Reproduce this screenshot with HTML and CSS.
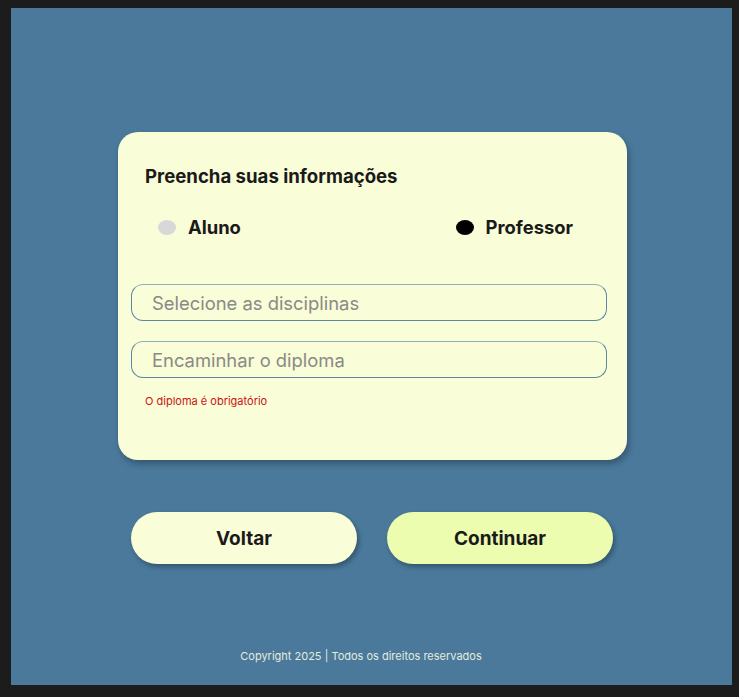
FILE: index.html
```html
<!DOCTYPE html>
<html lang="pt-BR">
<head>
<meta charset="utf-8">
<title>Preencha suas informações</title>
<link rel="stylesheet" href="styles.css">
</head>
<body>
<div class="frame">
  <section class="card">
    <h1 class="title">Preencha suas informações</h1>
    <div class="radios">
      <label class="radio"><span class="dot dot-off"></span><span class="radio-label">Aluno</span></label>
      <label class="radio"><span class="dot dot-on"></span><span class="radio-label">Professor</span></label>
    </div>
    <div class="field field-first">Selecione as disciplinas</div>
    <div class="field">Encaminhar o diploma</div>
    <p class="error">O diploma é obrigatório</p>
  </section>
  <div class="actions">
    <button class="btn btn-back">Voltar</button>
    <button class="btn btn-next">Continuar</button>
  </div>
  <footer class="footer">Copyright 2025 | Todos os direitos reservados</footer>
</div>
</body>
</html>
```
FILE: styles.css
```css
* { box-sizing: border-box; }
html, body { margin: 0; padding: 0; }
body {
  background: #1c1c1c;
  font-family: Inter, "Noto Sans", sans-serif;
  width: 739px;
  height: 697px;
  overflow: hidden;
}
.frame {
  margin: 8px 7px 0 11px;
  width: 721px;
  height: 677px;
  background: #4a799b;
  display: flex;
  flex-direction: column;
  padding-top: 124px;
}
.card {
  margin-left: 107px;
  width: 509px;
  height: 328px;
  background: #f9fdd8;
  border-radius: 20px;
  box-shadow: 2px 4px 6px rgba(0, 0, 0, 0.28);
  padding-top: 33px;
  display: flex;
  flex-direction: column;
}
.title {
  margin: 0 0 0 27px;
  font-size: 18.6px;
  line-height: 22px;
  font-weight: 700;
  color: #1a1a1a;
}
.radios {
  margin-top: 29px;
  display: flex;
  justify-content: space-between;
  padding: 0 54px 0 40px;
  height: 22px;
  align-items: center;
}
.radio {
  display: flex;
  align-items: center;
  gap: 12px;
}
.dot {
  width: 18px;
  height: 15px;
  border-radius: 50%;
}
.dot-off { background: #d8d8d8; }
.dot-on { background: #000; }
.radio-label {
  font-size: 18.4px;
  font-weight: 700;
  color: #1a1a1a;
  line-height: 22px;
}
.field {
  margin: 20px 0 0 13px;
  width: 476px;
  height: 37px;
  border: 1px solid #5b87a4;
  border-top-color: #8fb0b4;
  border-radius: 12px;
  padding-left: 20px;
  display: flex;
  align-items: center;
  font-size: 18.4px;
  color: #8a8a86;
}
.field-first { margin-top: 46px; }
.error {
  margin: 16px 0 0 27px;
  font-size: 11px;
  line-height: 14px;
  color: #cc1111;
}
.actions {
  margin: 52px 0 0 120px;
  display: flex;
  gap: 30px;
}
.btn {
  width: 226px;
  height: 52px;
  border: none;
  border-radius: 26px;
  font-family: Inter, "Noto Sans", sans-serif;
  font-size: 19px;
  font-weight: 700;
  color: #1a1a1a;
  box-shadow: 2px 3px 5px rgba(0, 0, 0, 0.3);
  padding: 0;
}
.btn-back { background: #f9fdd8; }
.btn-next { background: #ecfdb0; }
.footer {
  margin-top: 84px;
  padding-right: 21px;
  text-align: center;
  font-size: 11px;
  line-height: 16px;
  color: #e4ecdc;
}
```
